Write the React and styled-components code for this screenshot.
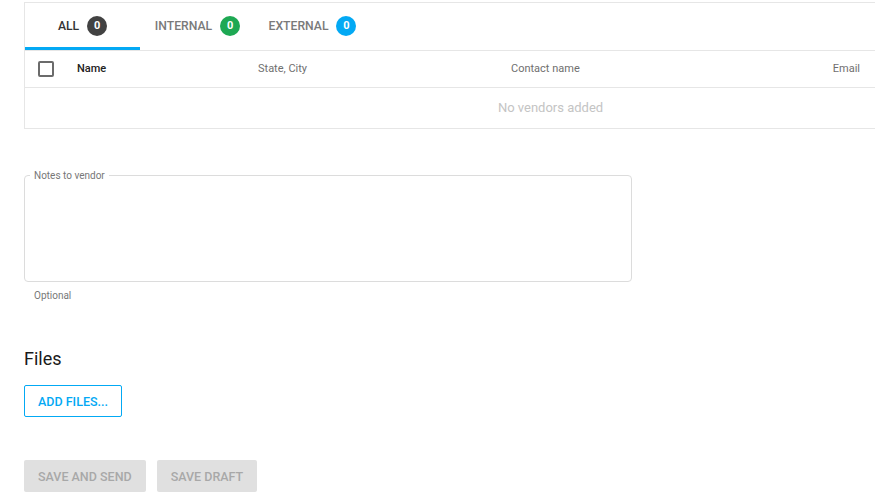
import React from "react";
import styled, { createGlobalStyle } from "styled-components";

const GlobalStyle = createGlobalStyle`
	html, body {
		margin: 0;
		padding: 0;
		background: #fff;
		overflow: hidden;
	}
	body {
		font-family: Roboto, "Liberation Sans", Arial, sans-serif;
		color: #212121;
	}
`;

const tabs = [
	{ label: "All", count: 0, color: "#424242", active: true },
	{ label: "Internal", count: 0, color: "#1ea853" },
	{ label: "External", count: 0, color: "#03a9f4" },
];

const columns = ["Name", "State, City", "Contact name", "Email"];

const App = () => {
	return (
		<Page>
			<GlobalStyle />
			<VendorCard>
				<TabBar>
					{tabs.map((tab) => (
						<Tab key={tab.label} $active={tab.active}>
							{tab.label}
							<Badge $color={tab.color}>{tab.count}</Badge>
						</Tab>
					))}
				</TabBar>
				<HeaderRow>
					<CheckCell>
						<Checkbox type="button" aria-label="select all" />
					</CheckCell>
					{columns.map((col, i) => (
						<HeadCell key={col} $strong={i === 0} $right={col === "Email"}>
							{col}
						</HeadCell>
					))}
				</HeaderRow>
				<EmptyRow>No vendors added</EmptyRow>
			</VendorCard>

			<NotesField>
				<legend>Notes to vendor</legend>
				<textarea />
			</NotesField>
			<Helper>Optional</Helper>

			<SectionTitle>Files</SectionTitle>
			<OutlineButton type="button">Add files...</OutlineButton>

			<Actions>
				<DisabledButton type="button" disabled>
					Save and send
				</DisabledButton>
				<DisabledButton type="button" disabled>
					Save draft
				</DisabledButton>
			</Actions>
		</Page>
	);
};

const Page = styled.div`
	padding: 2px 0 0 24px;
	width: 851px;
`;

const VendorCard = styled.div`
	width: 1052px;
	border: 1px solid #e6e6e6;
	border-right: none;
	box-sizing: border-box;
`;

const TabBar = styled.div`
	display: flex;
	height: 47px;
	border-bottom: 1px solid #e6e6e6;
`;

const Tab = styled.div`
	display: flex;
	align-items: center;
	justify-content: center;
	gap: 8px;
	min-width: 115px;
	padding: 1px 13px 0;
	box-sizing: border-box;
	font-size: 12.2px;
	font-weight: 500;
	text-transform: uppercase;
	color: ${(p) => (p.$active ? "#333" : "#7a7a7a")};
	border-bottom: 3px solid ${(p) => (p.$active ? "#03a9f4" : "transparent")};
	&:first-child {
		padding: 1px 0 0;
	}
`;

const Badge = styled.span`
	display: inline-flex;
	align-items: center;
	justify-content: center;
	width: 20px;
	height: 20px;
	border-radius: 50%;
	background: ${(p) => p.$color};
	color: #fff;
	font-size: 11px;
	font-weight: 700;
`;

const HeaderRow = styled.div`
	display: grid;
	grid-template-columns: 52px 181px 253px 313px 36px 1fr;
	align-items: center;
	height: 37px;
	padding-bottom: 1px;
	box-sizing: border-box;
	border-bottom: 1px solid #e6e6e6;
`;

const CheckCell = styled.div`
	display: flex;
	padding-left: 13px;
`;

const Checkbox = styled.button`
	width: 16px;
	height: 16px;
	padding: 0;
	border: 2px solid #6b6b6b;
	border-radius: 2px;
	background: #fff;
	box-sizing: border-box;
`;

const HeadCell = styled.div`
	font-size: 11px;
	font-weight: ${(p) => (p.$strong ? 500 : 400)};
	color: ${(p) => (p.$strong ? "#222" : "#6f6f6f")};
	text-align: ${(p) => (p.$right ? "right" : "left")};
	white-space: nowrap;
`;

const EmptyRow = styled.div`
	height: 40px;
	padding-bottom: 1px;
	box-sizing: border-box;
	display: flex;
	align-items: center;
	justify-content: center;
	font-size: 13px;
	color: #c4c4c4;
`;

const NotesField = styled.fieldset`
	margin: 40px 0 0;
	width: 608px;
	height: 113px;
	box-sizing: border-box;
	padding: 0 5px;
	border: 1px solid #dcdcdc;
	border-radius: 4px;
	legend {
		padding: 0 4px;
		font-size: 10px;
		color: #777;
		line-height: 13px;
	}
	textarea {
		display: block;
		width: 100%;
		height: 90px;
		border: none;
		outline: none;
		resize: none;
		font: inherit;
		background: transparent;
	}
`;

const Helper = styled.div`
	margin: 8px 0 0 10px;
	font-size: 10px;
	color: #777;
`;

const SectionTitle = styled.h2`
	margin: 46px 0 0;
	font-size: 18px;
	font-weight: 400;
	color: #1a1a1a;
	line-height: 24px;
`;

const OutlineButton = styled.button`
	margin-top: 14px;
	height: 32px;
	padding: 0 13px;
	border: 1px solid #03a9f4;
	border-radius: 2px;
	background: #fff;
	color: #03a9f4;
	font-family: inherit;
	font-size: 12.5px;
	font-weight: 500;
	text-transform: uppercase;
`;

const Actions = styled.div`
	display: flex;
	gap: 11px;
	margin-top: 43px;
`;

const DisabledButton = styled.button`
	height: 32px;
	padding: 0 14px;
	border: none;
	border-radius: 2px;
	background: #e0e0e0;
	color: #a8a8a8;
	font-family: inherit;
	font-size: 12.5px;
	font-weight: 500;
	text-transform: uppercase;
`;

export default App;
